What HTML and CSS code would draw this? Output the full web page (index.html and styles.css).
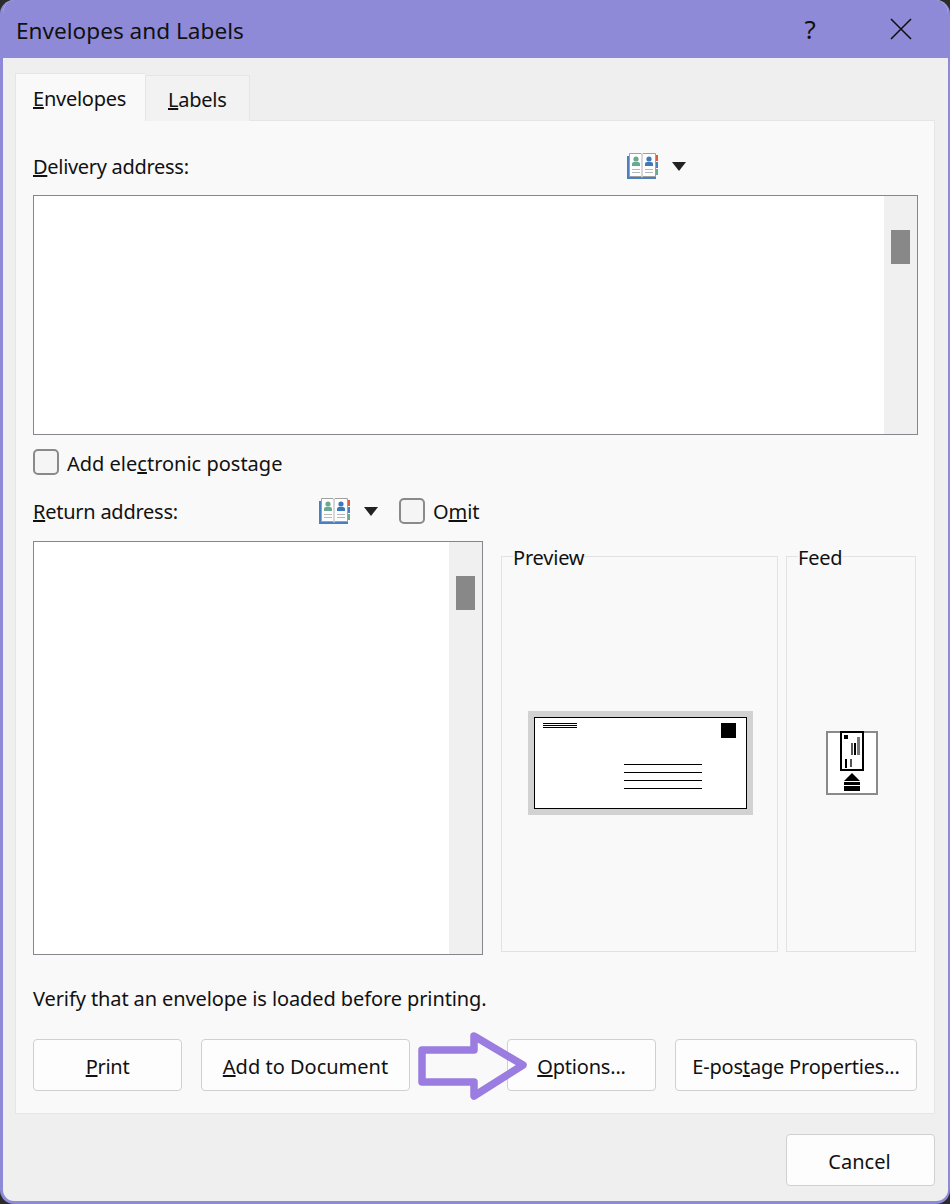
FILE: index.html
```html
<!DOCTYPE html>
<html lang="en">
<head>
<meta charset="utf-8">
<title>Envelopes and Labels</title>
<link rel="stylesheet" href="styles.css">
</head>
<body>
<div class="dialog">
  <header class="titlebar">
    <h1 class="title">Envelopes and Labels</h1>
    <span class="help">?</span>
    <svg class="close" width="22" height="22" viewBox="0 0 22 22"><path d="M1 1 L21 21 M21 1 L1 21" stroke="#111" stroke-width="1.6" fill="none"/></svg>
  </header>
  <main class="body">
    <nav class="tabs">
      <div class="tab tab-active"><u>E</u>nvelopes</div>
      <div class="tab"><u>L</u>abels</div>
    </nav>
    <section class="panel">
      <div class="row delivery-row">
        <label class="delivery-label"><span class="text-low"><u>D</u>elivery address:</span></label>
        <svg class="book" width="31" height="26" viewBox="0 0 31 26"><use href="#book"/></svg>
        <span class="caret"></span>
      </div>
      <div class="textbox delivery-box"><div class="scrollbar"><div class="thumb delivery-thumb"></div></div></div>
      <div class="row postage-row">
        <span class="check"></span>
        <span class="text-low">Add ele<u>c</u>tronic postage</span>
      </div>
      <div class="row return-row">
        <label class="return-label"><span class="text-low"><u>R</u>eturn address:</span></label>
        <svg class="book" width="31" height="26" viewBox="0 0 31 26"><use href="#book"/></svg>
        <span class="caret"></span>
        <span class="check omit-check"></span>
        <span class="text-low">O<u>m</u>it</span>
      </div>
      <div class="lower">
        <div class="textbox return-box"><div class="scrollbar"><div class="thumb return-thumb"></div></div></div>
        <fieldset class="group preview">
          <legend>Preview</legend>
          <svg width="225" height="104" viewBox="0 0 225 104">
            <rect width="225" height="104" fill="#d2d2d2"/>
            <rect x="6.500" y="6.500" width="212" height="91" fill="#fff" stroke="#000"/>
            <path d="M15 12.500H49M15 14.500H49M15 16.500H49M96 53.500H174M96 61.500H174M96 69.500H174M96 77.500H174" stroke="#000" stroke-width="1" fill="none" shape-rendering="crispEdges"/>
            <rect x="193" y="12" width="15" height="15" fill="#000"/>
          </svg>
        </fieldset>
        <fieldset class="group feed">
          <legend>Feed</legend>
          <svg width="52" height="64" viewBox="0 0 52 64" shape-rendering="crispEdges">
            <rect x="1" y="1" width="50" height="62" fill="#fff" stroke="#8a8a8a" stroke-width="2"/>
            <rect x="15" y="1" width="22" height="38" fill="#fff" stroke="#000" stroke-width="2"/>
            <rect x="18" y="4" width="4" height="4" fill="#000"/>
            <path d="M25 12h2v12h-2z" fill="#555"/>
            <path d="M27.500 12h2v12h-2z" fill="#000"/>
            <path d="M31 6h3v18h-3z" fill="#777"/>
            <path d="M19 28h2v9h-2z" fill="#000"/>
            <path d="M24 28h2v8h-2z" fill="#555"/>
            <path d="M26 42 L34 50 H18 Z" fill="#000" shape-rendering="auto"/>
            <path d="M18 51h16v3H18zM18 55h16v2.500H18zM18 58h16v2H18z" fill="#000"/>
          </svg>
        </fieldset>
      </div>
      <p class="verify">Verify that an envelope is loaded before printing.</p>
      <div class="actions">
        <button class="btn btn-print"><span class="text-low"><u>P</u>rint</span></button>
        <button class="btn btn-add"><span class="text-low"><u>A</u>dd to Document</span></button>
        <button class="btn btn-options"><span class="text-low"><u>O</u>ptions...</span></button>
        <button class="btn btn-epostage"><span class="text-low">E-pos<u>t</u>age Properties...</span></button>
      </div>
    </section>
    <footer class="footer">
      <button class="btn btn-cancel"><span class="text-low">Cancel</span></button>
    </footer>
  </main>
  <svg class="callout" width="125" height="80" viewBox="0 0 125 80">
    <path d="M7 21 H59 V7 L108 36 L59 67 V53 H7 Z" fill="none" stroke="#9b7ce0" stroke-width="7.500" stroke-linejoin="round"/>
  </svg>
</div>
<svg class="defs" width="0" height="0">
  <defs>
    <g id="book">
      <rect x="0" y="3" width="29" height="23" fill="#4a80bf"/>
      <rect x="29" y="2" width="2" height="6" fill="#d9603a"/>
      <rect x="29" y="9" width="2" height="6" fill="#4a80bf"/>
      <rect x="29" y="16" width="2" height="6" fill="#6aa98f"/>
      <path d="M2.500 .5 H14 L15 1.500 L16 .5 H28.500 V23.500 H16 L15 24.500 L14 23.500 H2.500 Z" fill="#fff" stroke="#a0a0a0"/>
      <path d="M15 1.500 V24" stroke="#b0b0b0" fill="none"/>
      <circle cx="9" cy="6" r="2.600" fill="#6aa98f"/>
      <path d="M5 13 V10.500 Q5 9 7 9 H11 Q13 9 13 10.500 V13 Z" fill="#6aa98f"/>
      <circle cx="22" cy="6" r="2.600" fill="#3f78b8"/>
      <path d="M18 13 V10.500 Q18 9 20 9 H24 Q26 9 26 10.500 V13 Z" fill="#3f78b8"/>
      <path d="M5 16.500H13M5 19.500H13M18 16.500H26M18 19.500H26" stroke="#b8b8b8" fill="none"/>
    </g>
  </defs>
</svg>
</body>
</html>
```
FILE: styles.css
```css
* { box-sizing: border-box; }
html, body { margin: 0; padding: 0; }
body {
  width: 950px;
  height: 1204px;
  background: #2b2b2b;
  font-family: "Noto Sans", "Open Sans", sans-serif;
  font-size: 20px;
  letter-spacing: -0.1px;
  line-height: 26px;
  color: #111;
  overflow: hidden;
}
.defs { position: absolute; }
.dialog {
  position: relative;
  width: 950px;
  height: 1204px;
  display: flex;
  flex-direction: column;
  background: #efefef;
  border: solid #8e8ad8;
  border-width: 0 2px 3px 3px;
  border-radius: 14px;
  overflow: hidden;
}
.titlebar {
  height: 58px;
  flex: none;
  display: flex;
  align-items: center;
  background: #8e8ad8;
  margin: 0 -2px 0 -3px;
  padding-left: 16px;
}
.title {
  flex: 1;
  margin: 0;
  padding-top: 4px;
  font-size: 22.600px;
  font-weight: 400;
  letter-spacing: 0;
  line-height: 32px;
  color: #111;
}
.help { font-size: 26px; width: 20px; margin-right: 70px; text-align: center; color: #111; }
.close { margin-right: 38px; }
.body { flex: 1; display: flex; flex-direction: column; padding: 15px 13px 0 12px; }
.tabs { display: flex; align-items: flex-end; height: 48px; margin-bottom: -1px; position: relative; letter-spacing: -0.25px; }
.tab {
  height: 46px;
  padding: 0 18px 0 22px;
  line-height: 47px;
  background: #f2f2f2;
  border: 1px solid #e5e5e5;
  border-bottom: 0;
  width: 105px;
}
.tab-active {
  width: 130px;
  height: 48px;
  padding-left: 17px;
  line-height: 49px;
  background: #f9f9f9;
  border-right: 0;
  position: relative;
  z-index: 1;
}
.panel {
  height: 994px;
  flex: none;
  background: #f9f9f9;
  border: 1px solid #e5e5e5;
  padding: 32px 16px 0 17px;
}
.row { display: flex; align-items: center; height: 26px; }
.text-low { position: relative; top: 1px; }
.delivery-label { width: 594px; letter-spacing: -0.3px; }
.return-label { width: 286px; letter-spacing: -0.25px; }
.caret {
  width: 0;
  height: 0;
  margin-left: 14px;
  border-left: 7px solid transparent;
  border-right: 7px solid transparent;
  border-top: 9px solid #222;
}
.textbox {
  position: relative;
  display: flex;
  justify-content: flex-end;
  background: #fff;
  border: 1px solid #86868e;
}
.delivery-box { height: 240px; margin-top: 16px; }
.return-box { width: 450px; height: 414px; flex: none; }
.scrollbar { width: 33px; background: #f0f0f0; padding: 0 7px; }
.thumb { height: 34px; background: #888; }
.delivery-thumb { margin-top: 34px; }
.return-thumb { margin-top: 34px; }
.postage-row { margin-top: 14px; letter-spacing: 0; }
.postage-row .text-low { top: 2px; }
.return-row { margin-top: 23px; }
.check {
  width: 26px;
  height: 26px;
  flex: none;
  margin-right: 8px;
  background: #f5f5f5;
  border: 2px solid #8a8a8a;
  border-radius: 5px;
}
.omit-check { margin-left: 21px; }
.lower { display: flex; align-items: flex-start; margin-top: 17px; }
.group {
  margin: 1px 0 0;
  padding: 5px 0 0 2px;
  height: 410px;
  min-width: 0;
  flex: none;
  border: 1px solid #e2e2e2;
  display: flex;
  align-items: center;
  justify-content: center;
}
.group legend { margin-left: 9px; padding: 4px 0 0; line-height: 24px; letter-spacing: -0.2px; }
.preview { width: 277px; margin-left: 18px; }
.feed { width: 130px; margin-left: 8px; }
.verify { margin: 31px 0 0; height: 26px; }
.actions { display: flex; margin-top: 27px; }
.btn {
  height: 52px;
  padding: 0;
  background: #fdfdfd;
  border: 1px solid #d0d0d0;
  border-radius: 4px;
  font: inherit;
  letter-spacing: -0.2px;
  color: #111;
  flex: none;
}
.btn .text-low { top: 2px; }
.btn-print { width: 149px; letter-spacing: -0.3px; }
.btn-add { width: 209px; margin-left: 19px; letter-spacing: 0; }
.btn-options { width: 149px; margin-left: 97px; }
.btn-epostage { width: 242px; margin-left: 19px; letter-spacing: -0.2px; }
.footer { display: flex; justify-content: flex-end; margin-top: 20px; }
.btn-cancel { width: 149px; padding-right: 2px; letter-spacing: 0; }
.callout { position: absolute; left: 412px; top: 1029px; }
```
